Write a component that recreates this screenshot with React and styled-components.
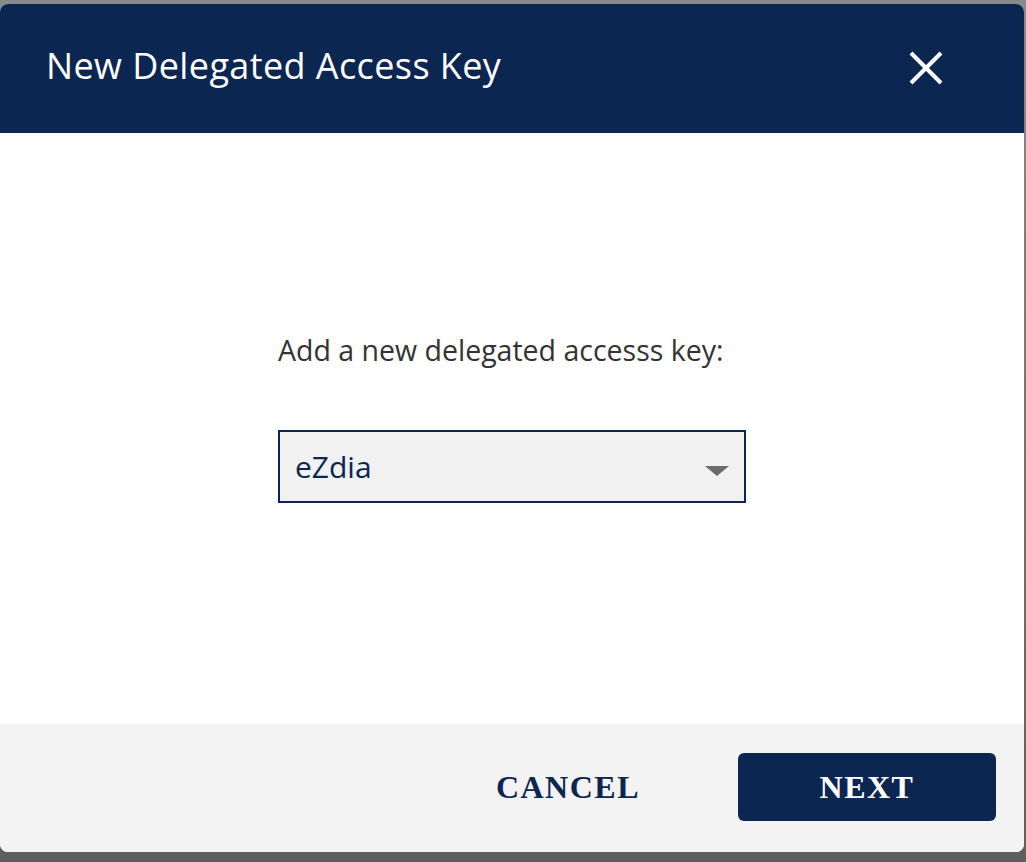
import React from 'react'
import styled, { createGlobalStyle } from 'styled-components'

const GlobalStyle = createGlobalStyle`
  html, body {
    margin: 0;
    padding: 0;
  }
  body {
    background: linear-gradient(180deg, #8a8a8a 0%, #5e5e5e 100%);
    font-family: 'Open Sans', 'Noto Sans', sans-serif;
  }
`
const Backdrop = styled.div`
  width: 1026px;
  height: 862px;
  padding: 4px 2px 10px 0;
  box-sizing: border-box;
  display: flex;
`
const Modal = styled.div`
  flex: 1;
  display: flex;
  flex-direction: column;
  background: #fff;
  border-radius: 8px;
  overflow: hidden;
`
const Header = styled.div`
  flex: 0 0 129px;
  background: #0b2651;
  display: flex;
  align-items: center;
  justify-content: space-between;
  padding: 0 78px 0 46px;
  box-sizing: border-box;
`
const Title = styled.h1`
  margin: 0 0 6px;
  color: #fff;
  font-size: 36px;
  font-weight: 500;
  letter-spacing: 0.4px;
`
const CloseButton = styled.button`
  width: 40px;
  height: 40px;
  padding: 0;
  border: none;
  background: transparent;
  display: flex;
  align-items: center;
  justify-content: center;
  cursor: pointer;
  margin-bottom: 2px;
`
const Body = styled.div`
  flex: 0 0 591px;
  box-sizing: border-box;
  display: flex;
  flex-direction: column;
  align-items: center;
  justify-content: center;
  padding-bottom: 22px;
`
const Field = styled.div`
  width: 468px;
  display: flex;
  flex-direction: column;
  gap: 62px;
`
const Label = styled.label`
  color: #333;
  font-size: 28.5px;
  line-height: 36px;
`
const Select = styled.div`
  height: 73px;
  box-sizing: border-box;
  border: 2px solid #0b2651;
  background: #f1f1f1;
  display: flex;
  align-items: center;
  justify-content: space-between;
  padding: 0 15px 0 15px;
  color: #0b2651;
  font-size: 30px;
`
const Caret = styled.span`
  width: 0;
  height: 0;
  border-left: 12px solid transparent;
  border-right: 12px solid transparent;
  border-top: 10px solid #6b6b6b;
  margin-top: 8px;
`
const Footer = styled.div`
  flex: 1 0 auto;
  background: #f3f3f3;
  display: flex;
  align-items: center;
  justify-content: flex-end;
  gap: 98px;
  padding: 0 28px 2px 0;
`
const ActionButton = styled.button`
  font-family: 'Liberation Serif', 'Times New Roman', serif;
  font-weight: 700;
  font-size: 32px;
  letter-spacing: 1.5px;
  text-transform: uppercase;
  border: none;
  border-radius: 6px;
  cursor: pointer;
  height: 68px;
  width: ${p => (p.primary ? '258px' : 'auto')};
  padding: 0;
  color: ${p => (p.primary ? '#fff' : '#0b2651')};
  background: ${p => (p.primary ? '#0b2651' : 'transparent')};
`

export default function App() {
  return (
    <>
      <GlobalStyle />
      <Backdrop>
        <Modal>
          <Header>
            <Title>New Delegated Access Key</Title>
            <CloseButton aria-label="Close">
              <svg width="34" height="34" viewBox="0 0 34 34">
                <path d="M2 2 L32 32 M32 2 L2 32" stroke="#fff" strokeWidth="4" />
              </svg>
            </CloseButton>
          </Header>
          <Body>
            <Field>
              <Label>Add a new delegated accesss key:</Label>
              <Select>
                <span>eZdia</span>
                <Caret />
              </Select>
            </Field>
          </Body>
          <Footer>
            <ActionButton>Cancel</ActionButton>
            <ActionButton primary>Next</ActionButton>
          </Footer>
        </Modal>
      </Backdrop>
    </>
  )
}
